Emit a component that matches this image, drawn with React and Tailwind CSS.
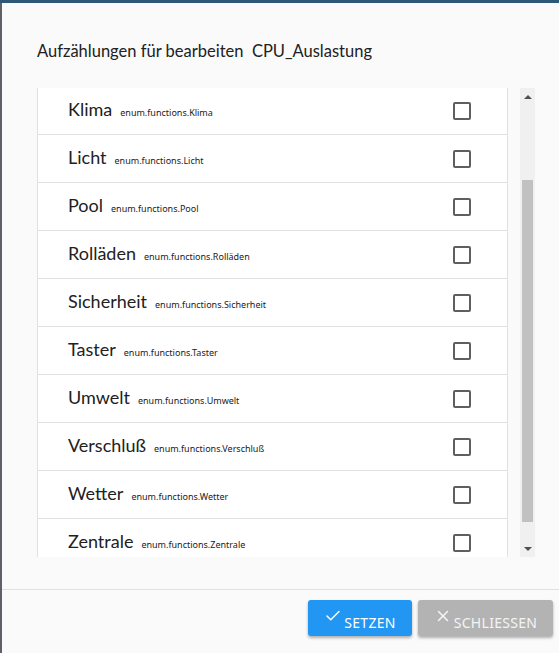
import React from 'react';
import { Check, X } from 'lucide-react';

// Enum assignment dialog for a state object
const items = [
  'Klima',
  'Licht',
  'Pool',
  'Rolläden',
  'Sicherheit',
  'Taster',
  'Umwelt',
  'Verschluß',
  'Wetter',
  'Zentrale',
];

const font = { fontFamily: 'Lato, "Noto Sans", sans-serif' };
const small = { fontFamily: '"Noto Sans", sans-serif' };

const Row = ({ name }) => (
  <div className="flex h-[48px] shrink-0 items-center border-b border-[#e0e0e0] pl-[30px] pr-[36px]">
    <span className="-mt-[3px] text-[18px] leading-none text-[#212121]">{name}</span>
    <span className="ml-[8px] mt-[3px] text-[9px] leading-none text-[#212121]" style={small}>enum.functions.{name}</span>
    <span className="ml-auto h-[18px] w-[18px] rounded-[2px] border-2 border-[#5f5f5f]" />
  </div>
);

const App = () => {
  return (
    <div className="flex h-[653px] w-[559px] flex-col overflow-hidden bg-[#5e6266]" style={font}>
      <div className="h-[3px] shrink-0 bg-[#2e5878]" />
      <div className="ml-[2px] flex flex-1 flex-col bg-[#fafafa]">
        <h2 className="pl-[35px] pt-[36px] text-[16.5px] leading-[24px] text-[#212121]">
          Aufzählungen für bearbeiten&nbsp; CPU_Auslastung
        </h2>

        <div className="mt-[25px] flex h-[469px] pl-[35px]">
          <div className="flex w-[471px] flex-col overflow-hidden border-l border-r border-[#e0e0e0] bg-white">
            <div className="-mt-[1px] flex flex-col">
              {items.map((name) => (
                <Row key={name} name={name} />
              ))}
            </div>
          </div>

          {/* scrollbar */}
          <div className="ml-[12px] flex w-[15px] flex-col bg-[#f0f0f0]">
            <div className="flex h-[17px] items-center justify-center">
              <span className="h-0 w-0 border-x-[4px] border-b-[4px] border-x-transparent border-b-[#505050]" />
            </div>
            <div className="mx-[2px] mt-[75px] h-[342px] bg-[#c1c1c1]" />
            <div className="mt-auto flex h-[17px] items-center justify-center">
              <span className="h-0 w-0 border-x-[4px] border-t-[4px] border-x-transparent border-t-[#505050]" />
            </div>
          </div>
        </div>

        <div className="mt-[32px] border-t border-[#e0e0e0]" />

        <div className="flex justify-end gap-[6px] pr-[6px] pt-[10px]" style={small}>
          <button className="flex h-[36px] w-[104px] items-center justify-center rounded-[3px] bg-[#2196f3] pt-[8px] text-[14px] tracking-[0.3px] text-white shadow-[0_2px_3px_rgba(0,0,0,0.3)]">
            <Check className="-mt-[12px] mr-[2px] h-[18px] w-[18px]" strokeWidth={2} />
            SETZEN
          </button>
          <button className="flex h-[36px] w-[135px] items-center justify-center rounded-[3px] bg-[#b3b3b3] pt-[8px] text-[14px] tracking-[0.3px] text-[#f4f4f4] shadow-[0_2px_3px_rgba(0,0,0,0.3)]">
            <X className="-mt-[12px] mr-[2px] h-[18px] w-[18px]" strokeWidth={2} />
            SCHLIESSEN
          </button>
        </div>
      </div>
    </div>
  );
};

export default App;
